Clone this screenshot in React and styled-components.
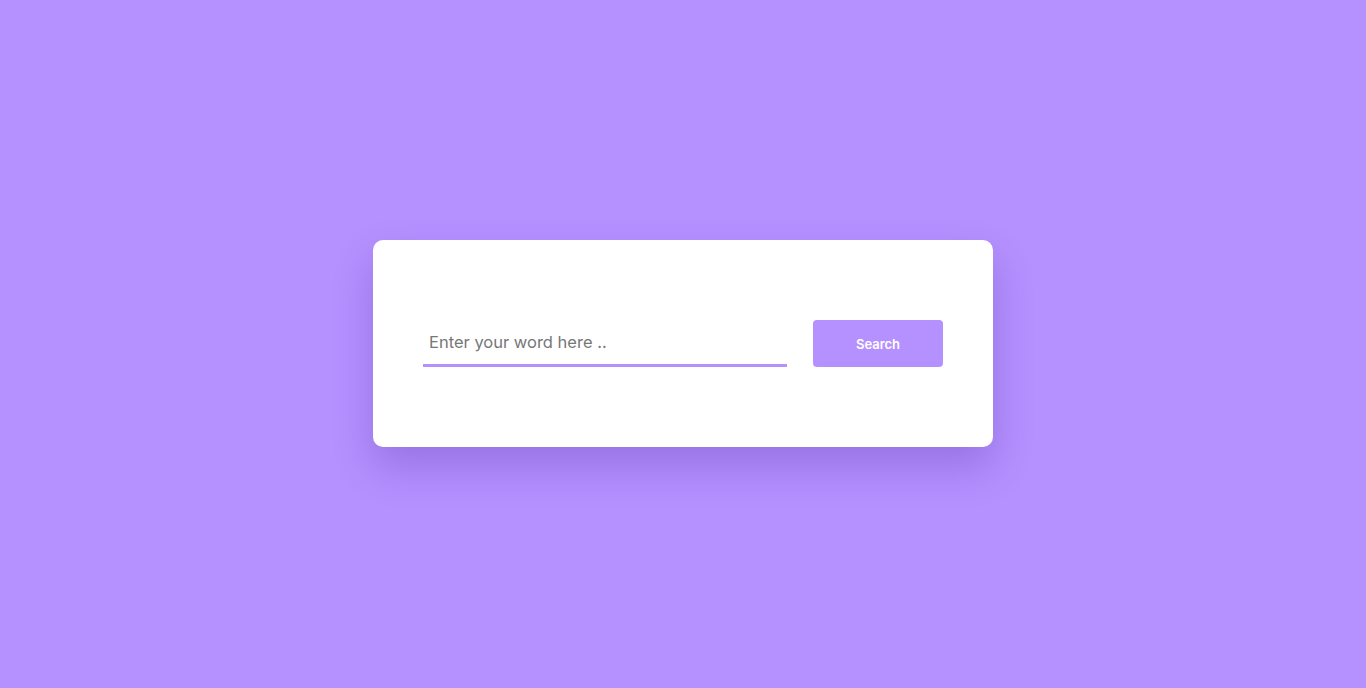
import React from 'react';
import styled, { createGlobalStyle } from 'styled-components';

const GlobalStyles = createGlobalStyle`
    html, body {
        margin: 0;
        padding: 0;
        height: 100%;
    }
    body {
        background: #b591ff;
        font-family: Inter, "Open Sans", sans-serif;
    }
    #root {
        height: 100%;
    }
`;

const Page = styled.main`
    display: flex;
    align-items: center;
    justify-content: center;
    width: 100%;
    height: 100vh;
    box-sizing: border-box;
    padding-bottom: 1px;
`;

const Card = styled.div`
    display: flex;
    align-items: flex-end;
    gap: 26px;
    width: 620px;
    box-sizing: border-box;
    padding: 80px 50px;
    background: #fff;
    border-radius: 10px;
    box-shadow: 0 20px 40px rgba(60, 20, 140, 0.24);
`;

const Input = styled.input`
    flex: 1;
    height: 47px;
    box-sizing: border-box;
    border: none;
    border-bottom: 3px solid #b591ff;
    padding: 0 6px;
    font-family: Inter, "Open Sans", sans-serif;
    font-size: 16.5px;
    color: #333;
    outline: none;
    background: transparent;

    &::placeholder {
        color: #777;
    }
`;

const Button = styled.button`
    width: 130px;
    height: 47px;
    border: none;
    border-radius: 4px;
    background: #b591ff;
    color: #fff;
    font-family: Inter, "Open Sans", sans-serif;
    font-size: 13px;
    font-weight: 600;
    cursor: pointer;
`;

const App = () => (
    <>
        <GlobalStyles />
        <Page>
            <Card>
                <Input type="text" placeholder="Enter your word here .." />
                <Button type="button">Search</Button>
            </Card>
        </Page>
    </>
);

export default App;
